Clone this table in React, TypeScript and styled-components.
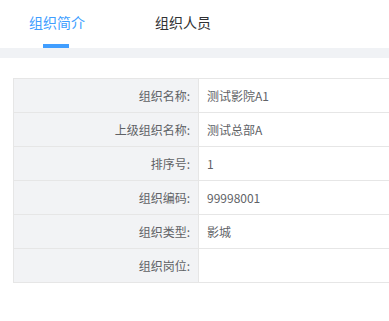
import { createGlobalStyle, styled } from "styled-components";

const GlobalStyle = createGlobalStyle`
  html, body {
    margin: 0;
    padding: 0;
    background: #fff;
  }
  body {
    font-family: "Noto Sans CJK SC", "Noto Sans", sans-serif;
    color: #606266;
  }
`;

const Page = styled.div`
  width: 100%;
`;

const TabBar = styled.div`
  display: flex;
  gap: 70px;
  height: 48px;
  padding-left: 29px;
`;

const Tab = styled.div<{ $active?: boolean }>`
  position: relative;
  width: 56px;
  font-size: 14px;
  line-height: 20px;
  padding-top: 12px;
  color: ${(p) => (p.$active ? "#409eff" : "#303133")};

  &::after {
    content: "";
    display: ${(p) => (p.$active ? "block" : "none")};
    position: absolute;
    left: 14px;
    bottom: 0;
    width: 26px;
    height: 4px;
    background: #409eff;
  }
`;

const Divider = styled.div`
  height: 10px;
  background: #f0f2f5;
`;

const Body = styled.div`
  padding: 20px 0 0 13px;
`;

const Table = styled.table`
  width: 100%;
  border-collapse: collapse;
  font-size: 12px;
`;

const Label = styled.th`
  width: 172px;
  height: 33px;
  padding: 0 8px 0 4px;
  text-align: right;
  font-weight: normal;
  color: #606266;
  background: #f2f3f5;
  border: 1px solid #e6e6e6;
`;

const Value = styled.td`
  height: 33px;
  padding: 0 8px;
  color: #606266;
  border: 1px solid #e6e6e6;
  border-right: none;
`;

const rows: [string, string][] = [
  ["组织名称:", "测试影院A1"],
  ["上级组织名称:", "测试总部A"],
  ["排序号:", "1"],
  ["组织编码:", "99998001"],
  ["组织类型:", "影城"],
  ["组织岗位:", ""],
];

export default function App() {
  return (
    <Page>
      <GlobalStyle />
      <TabBar>
        <Tab $active>组织简介</Tab>
        <Tab>组织人员</Tab>
      </TabBar>
      <Divider />
      <Body>
        <Table>
          <tbody>
            {rows.map(([label, value]) => (
              <tr key={label}>
                <Label>{label}</Label>
                <Value>{value}</Value>
              </tr>
            ))}
          </tbody>
        </Table>
      </Body>
    </Page>
  );
}
